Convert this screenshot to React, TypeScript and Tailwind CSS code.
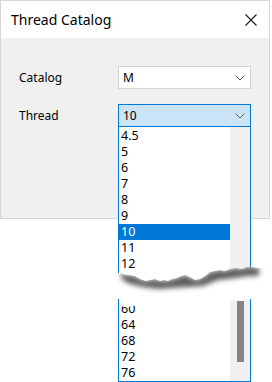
import React from 'react';

const topItems = ['4.5', '5', '6', '7', '8', '9', '10', '11', '12'];
const bottomItems = ['60', '64', '68', '72', '76'];

const Chevron = () => (
  <svg width="10" height="6" viewBox="0 0 10 6" className="text-[#606060]">
    <path d="M0.5 0.5 L5 5 L9.5 0.5" fill="none" stroke="currentColor" strokeWidth="1" />
  </svg>
);

const ComboBox = ({ value, active }: { value: string; active?: boolean }) => (
  <div
    className={`w-[133px] h-[23px] flex items-center justify-between pl-[4px] pr-[5px] border ${
      active ? 'bg-[#cce4f7] border-[#0078d7]' : 'bg-white border-[#d4d4d4]'
    }`}
  >
    <span className="text-[12px] text-black">{value}</span>
    <Chevron />
  </div>
);

// torn paper edge between the two halves of the list
const TornEdge = () => {
  const edge =
    'M2 7 L5 8 L10 9 L17 10 L22 13 L28 15 L32 14 L37 13 L42 15 L46 14 L50 15 L54 13 L59 12 L63 10 L67 9 L72 11 L77 14 L82 13 L87 10 L92 6 L97 5 L102 4 L107 5 L112 3 L118 2 L124 3 L129 1 L134 1 L140 2';
  const shadow = `${edge} L142 5 L140 10 L130 10 L118 12 L100 14 L85 20 L70 21 L55 22 L40 23 L25 21 L12 18 L6 15 L3 11 Z`;
  return (
    <svg width="150" height="40" viewBox="0 0 150 40" className="absolute left-0 top-[139px]">
      <defs>
        <clipPath id="below">
          <path d={`${edge} L150 2 L150 40 L0 40 L0 7 Z`} />
        </clipPath>
        <filter id="soft" x="-10%" y="-50%" width="120%" height="200%">
          <feGaussianBlur stdDeviation="2.4" />
        </filter>
      </defs>
      <path d={`${edge} L150 2 L150 40 L0 40 L0 7 Z`} fill="#ffffff" />
      <g clipPath="url(#below)">
        <path d={shadow} fill="#5e5e5e" filter="url(#soft)" />
      </g>
    </svg>
  );
};

export default function App() {
  return (
    <div className="relative w-[272px] h-[382px] bg-white overflow-hidden font-['Noto_Sans',sans-serif] text-black">
      <div className="w-[270px] h-[219px] border border-[#d6d6d6] flex flex-col">
        <div className="h-[37px] bg-white flex items-center justify-between pl-[10px] pr-[12px]">
          <span className="text-[14px]">Thread Catalog</span>
          <svg width="12" height="12" viewBox="0 0 12 12">
            <path d="M0.5 0.5 L11.5 11.5 M11.5 0.5 L0.5 11.5" stroke="#1a1a1a" strokeWidth="1.1" />
          </svg>
        </div>
        <div className="flex-1 bg-[#f0f0f0] pl-[18px] pt-[28px] flex flex-col gap-[15px]">
          <div className="flex items-center">
            <span className="w-[99px] text-[12px]">Catalog</span>
            <ComboBox value="M" />
          </div>
          <div className="flex items-center">
            <span className="w-[99px] text-[12px]">Thread</span>
            <ComboBox value="10" active />
          </div>
        </div>
      </div>

      {/* open dropdown list */}
      <div className="absolute left-[118px] top-[127px] w-[150px] h-[255px]">
        <div className="w-[133px] h-[150px] bg-white border-x border-[#0078d7] flex overflow-hidden">
          <div className="flex-1 pt-[1px]">
            {topItems.map((item) => (
              <div
                key={item}
                className={`h-[16px] leading-[16px] pl-[2px] text-[12.5px] ${
                  item === '10' ? 'bg-[#0078d7] text-white' : ''
                }`}
              >
                {item}
              </div>
            ))}
          </div>
          <div className="w-[20px] bg-[#f0f0f0]" />
        </div>
        <TornEdge />

        <div className="absolute left-0 top-[172px] w-[133px] h-[83px] bg-white border-x border-b border-[#0078d7] flex overflow-hidden">
          <div className="flex-1 flex flex-col justify-end">
            {bottomItems.map((item) => (
              <div key={item} className="h-[16px] leading-[16px] pl-[2px] text-[12.5px]">
                {item}
              </div>
            ))}
          </div>
          <div className="w-[20px] bg-[#f0f0f0] flex justify-center pt-[2px]">
            <div className="w-[7px] h-[61px] bg-[#858585]" />
          </div>
          <svg width="133" height="9" viewBox="0 0 133 9" className="absolute -left-px top-0">
            <path
              d="M0 0 L133 0 L133 1 L128 2 L120 1 L112 2 L108 1 L100 3 L90 4 L80 3 L70 5 L60 4 L50 6 L40 5 L30 7 L20 6 L10 8 L0 7 Z"
              fill="#ffffff"
            />
          </svg>
        </div>
      </div>
    </div>
  );
}
